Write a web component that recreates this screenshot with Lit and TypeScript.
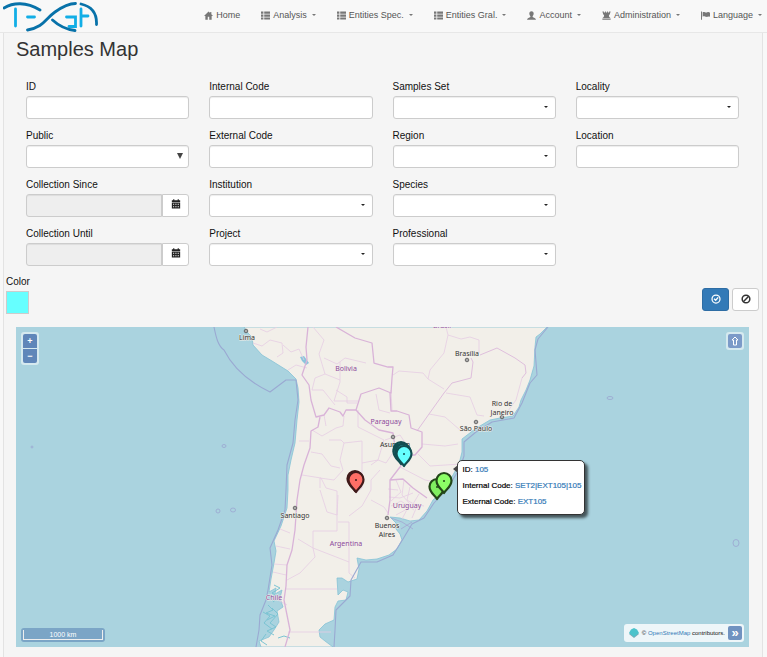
import { LitElement, html, svg, css } from "lit";
import { customElement } from "lit/decorators.js";

const icons: Record<string, unknown> = {
  home: svg`<path d="M6 0.5 L0 6.6 H1.8 V11.500 H5 V7.8 H7 V11.500 H10.200 V6.6 H12 L9.8 4.4 V1.2 H8.2 V2.8 Z"/>`,
  list: svg`<path d="M0 0.8h3.200v2.800h-3.200zM4.3 0.8h7.700v2.800h-7.700zM0 4.7h3.200v2.800h-3.200zM4.3 4.7h7.700v2.800h-7.700zM0 8.600h3.200v2.800h-3.200zM4.3 8.600h7.700v2.800h-7.700z"/>`,
  user: svg`<path d="M6 0.2C8 0.2 9 1.6 8.9 3.5C8.8 5.1 7.9 6.2 7.5 6.9V7.9C8.8 8.7 11.8 9.2 12 11.700H0C0.2 9.2 3.2 8.7 4.5 7.9V6.9C4.1 6.2 3.2 5.1 3.1 3.5C3 1.6 4 0.2 6 0.2Z"/>`,
  tower: svg`<path d="M0.5 0.5H2.5V2H4V0.5H5.2V2H6.8V0.5H8V2H9.5V0.5H11.500L10.200 5H9.200L9.6 8.3H10.800V9.300H1.200V8.3H2.4L2.8 5H1.8ZM0.5 10H11.500V11.700H0.5Z"/>`,
  flag: svg`<path d="M0 0.8H1.3V11.700H0ZM2.2 1.6C4.5 0.4 6 2.8 8 1.9C9.3 1.3 10.6 1.2 12 2.2V7.8C10.4 6.8 9.1 7.4 8 7.8C6 8.5 4.5 6.1 2.2 7.5Z"/>`,
  calendar: svg`<path fill-rule="evenodd" d="M1 1.6H2.6V0.4H4V1.6H8V0.4H9.4V1.6H11V3.8H1ZM1 4.5H11V11.5H1ZM2.4 5.6V6.8H3.5V5.6ZM4.6 5.6V6.8H5.6V5.6ZM6.6 5.6V6.8H7.6V5.6ZM8.6 5.6V6.8H9.6V5.6ZM2.4 8.6V9.8H3.5V8.6ZM4.6 8.6V9.8H5.6V8.6ZM6.6 8.6V9.8H7.6V8.6ZM8.6 8.6V9.8H9.6V8.6Z"/>`,
  check: svg`<g fill="none" stroke="currentColor"><circle cx="6" cy="6" r="4.8" stroke-width="1.5"/><path d="M3.7 5.8L5.6 7.6L8.6 4" stroke-width="1.7"/></g>`,
  ban: svg`<g fill="none" stroke="currentColor" stroke-width="1.8"><circle cx="6" cy="6" r="4.6"/><path d="M9.2 2.8L2.8 9.2"/></g>`,
};

const icon = (name: string) =>
  html`<svg class="icon" viewBox="0 0 12 12" aria-hidden="true">${icons[name]}</svg>`;

const menu = [
  { icon: "home", text: "Home", caret: false },
  { icon: "list", text: "Analysis", caret: true },
  { icon: "list", text: "Entities Spec.", caret: true },
  { icon: "list", text: "Entities Gral.", caret: true },
  { icon: "user", text: "Account", caret: true },
  { icon: "tower", text: "Administration", caret: true },
  { icon: "flag", text: "Language", caret: true },
];

type Kind = "text" | "pick" | "native" | "date";
const fields: [string, Kind][][] = [
  [["ID", "text"], ["Public", "native"], ["Collection Since", "date"], ["Collection Until", "date"]],
  [["Internal Code", "text"], ["External Code", "text"], ["Institution", "pick"], ["Project", "pick"]],
  [["Samples Set", "pick"], ["Region", "pick"], ["Species", "pick"], ["Professional", "pick"]],
  [["Locality", "pick"], ["Location", "text"]],
];

/* Navigation bar with the DNA logo. */
@customElement("top-nav")
export class TopNav extends LitElement {
  static styles = css`
    :host { display: block; }
    nav {
      display: flex; justify-content: space-between; align-items: flex-start;
      height: 32px; padding: 0 5px 0 3px;
      background: #f8f8f8; border-bottom: 1px solid #e7e7e7;
    }
    .logo { display: block; width: 96px; height: 32px; }
    .logo svg { display: block; width: 96px; height: 32px; }
    ul { display: flex; gap: 21px; margin: 0; padding: 8px 0 0; list-style: none; }
    a {
      display: flex; align-items: center; gap: 3px;
      font-size: 9px; line-height: 14px; color: #555; text-decoration: none; white-space: nowrap;
    }
    .icon { width: 9px; height: 9px; fill: #777; color: #777; }
    .caret { margin-left: 2px; border: solid transparent; border-width: 2px 2px 0; border-top-color: #777; }
  `;

  render() {
    return html`<nav>
      <a class="logo" href="#" aria-label="Home page">
        <svg viewBox="3 0 96 32" fill="none" stroke-linecap="round" stroke-width="2.8">
          <g stroke="#12aee6">
            <path d="M15.500 9V26M27.500 17H34.500M66.500 17H75.500V26.500H69M81 9V26M82 16H88"/>
          </g>
          <g stroke="#0872a9">
            <path d="M4 8C13 2.500 26 1.500 40 10M27.500 30C44 27 45 19 55 12C62 7 68 3.500 75.500 3.500M52.500 20C59 26 66 29.500 75 30.500M81 4C92 6.500 97 14 96.500 24.500"/>
          </g>
        </svg>
      </a>
      <ul>
        ${menu.map((m) => html`<li><a href="#">${icon(m.icon)}<span>${m.text}</span>${m.caret ? html`<span class="caret"></span>` : ""}</a></li>`)}
      </ul>
    </nav>`;
  }
}

/* Filter form above the map. */
@customElement("sample-filters")
export class SampleFilters extends LitElement {
  static styles = css`
    :host { display: block; }
    .grid { display: grid; grid-template-columns: repeat(4, 1fr); gap: 20px; padding: 0 23px 0 22px; align-items: start; }
    .column { display: grid; gap: 10px; }
    .field { display: grid; gap: 2px; }
    label { font-size: 10px; line-height: 14px; color: #111; }
    input, select, button { box-sizing: border-box; margin: 0; font: inherit; }
    .box {
      width: 100%; height: 23px; padding: 0 6px; min-width: 0;
      border: 1px solid #ccc; border-radius: 3px; background: #fff;
      box-shadow: inset 0 1px 1px rgba(0, 0, 0, 0.075);
    }
    select { appearance: none; }
    .select { position: relative; display: flex; }
    .select::after {
      content: ""; position: absolute; right: 8px; top: 10px; pointer-events: none;
      border: solid transparent; border-width: 2px 2px 0; border-top-color: #222;
    }
    .native::after { right: 6px; top: 8px; border-width: 6px 3px 0; border-top-color: #444; }
    .date { display: flex; }
    .date .box { flex: 1; border-radius: 3px 0 0 3px; background: #eee; }
    .date button {
      display: grid; place-items: center; width: 27px; height: 23px; padding: 0 0 3px;
      border: 1px solid #ccc; border-radius: 0 3px 3px 0; background: #fff; color: #222;
    }
    .icon { width: 10px; height: 10px; fill: currentColor; }
    .footer { display: flex; justify-content: space-between; align-items: flex-end; padding: 9px 3px 0 2px; }
    .color { display: grid; gap: 2px; }
    .swatch { width: 23px; height: 23px; padding: 0; border: 1px solid #ccc; background: none; appearance: none; }
    .swatch::-webkit-color-swatch-wrapper { padding: 0; }
    .swatch::-webkit-color-swatch { border: 0; border-radius: 0; }
    .actions { display: flex; gap: 3px; padding-bottom: 3px; }
    .actions button {
      display: grid; place-items: center; width: 27px; height: 23px; padding: 0 0 2px;
      border: 1px solid #ccc; border-radius: 3px; background: #fff; color: #333;
    }
    .actions .primary { background: #337ab7; border-color: #2e6da4; color: #fff; }
  `;

  private control(kind: Kind, id: string) {
    if (kind === "text") return html`<input class="box" type="text" id=${id}>`;
    if (kind === "date")
      return html`<div class="date"><input class="box" type="text" id=${id} readonly><button type="button" aria-label="Open calendar">${icon("calendar")}</button></div>`;
    return html`<div class="select ${kind === "native" ? "native" : ""}"><select class="box" id=${id}><option></option></select></div>`;
  }

  render() {
    return html`<form>
      <div class="grid">
        ${fields.map((col) => html`<div class="column">
          ${col.map(([text, kind]) => {
            const id = text.toLowerCase().replace(" ", "-");
            return html`<div class="field"><label for=${id}>${text}</label>${this.control(kind, id)}</div>`;
          })}
        </div>`)}
      </div>
      <div class="footer">
        <div class="color"><label for="color">Color</label><input class="swatch" id="color" type="color" value="#66ffff"></div>
        <div class="actions">
          <button class="primary" type="button" aria-label="Apply">${icon("check")}</button>
          <button type="button" aria-label="Clear">${icon("ban")}</button>
        </div>
      </div>
    </form>`;
  }
}

const LAND =
  "M244 327L248 333L252 337L253 345L262 355L272 361L288 371L296 379L298 388L299 402L297 420L295 443L291 460L288 475L288 490L287 508L281 526L274 541L276 551L274 563L271 579L269 592L276 588L275 594L282 590L280 598L283 607L277 611L279 622L274 630L269 637L259 641L261 647H333L325 641L320 637L319 630L325 624L334 620L335 607L338 601L346 600L348 592L343 590L338 595L337 578L342 578L348 582L357 579L359 569L357 558L366 560L377 559L389 555L397 549L402 540L400 534L396 529L396 523L390 517L400 518L410 521L419 520L427 511L433 500L443 490L453 475L459 464L462 452L462 439L475 429L490 420L500 418L513 416L519 407L521 400L526 390L530 380L534 366L535 347L536 337L540 334L547 327Z";

const COASTLINES = [
  "M214 327C216 337 218 346 224 350C232 366 245 380 270 392L286 380H296L298 400L295 420L293 443L287 465L286 490L285 510L278 530L270 548L272 565L268 590L266 600L260 615L259 630L256 647",
  "M334 647L335 630L336 610L350 596L351 580L361 562L377 562L393 555L403 539L412 524L424 518L434 503L447 489L460 468L464 456L464 442L476 432L492 422L514 418L522 403L530 383L537 375L535 350L538 339L548 327",
];

const BORDERS = [
  "M308 327L306 347L307 360L302 375L309 385L311 400L316 417L324 415L329 408L340 412L343 416L346 410H356L361 394L379 388L391 393L392 378L393 367H388L374 363L372 343L355 338L336 327",
  "M320 417L318 427L311 431L310 448L304 465L300 480L297 500L295 530L292 550L287 565L286 586L284 600L287 615L290 630L285 647",
  "M356 410L365 420L379 430L393 433L395 447L400 455H415L422 447V432L411 428L409 415L397 411H391L390 393",
  "M409 453L400 467L390 480L390 500L388 515M390 480L403 479L413 488L427 498",
];

const PROVINCES = [
  "M446 327L448 335L461 339L470 337L479 340V353M448 335L444 353L430 370L428 379L444 389M393 375L399 371L423 373L428 379M446 393L470 397L477 415L484 416M429 414L445 417L460 430M422 444L445 446L458 444M418 454L430 466L461 464M400 467L425 480L446 484M391 390L392 410M522 378L516 400L505 415",
  "M253 343L262 346L270 340L282 343L283 353L277 357M260 329L267 332L277 327M283 345L291 352L299 349L304 360M288 370L296 365L307 368M313 327L324 340L319 354L325 374L340 380M324 358L337 364L345 358L366 363M325 374L315 378L312 390M340 362V382L334 401H358M336 390L347 397V403H357M312 390H323L335 405",
  "M312 430L322 436L336 428L343 426L344 416M324 415L326 426M299 441H309M329 440H341L344 443L362 441V488L356 493M344 443L340 460L343 470L334 480L320 478V488M311 452L322 454L331 466L340 468M362 463L378 460L386 463L392 454M302 475L321 478L326 488L337 491V531H313V548L298 539M320 490L327 512L337 515L338 495M338 522H349V573L355 578M349 516L362 506L371 490V480L380 470M371 500L384 507L388 513M287 580L300 573L315 557L313 548L349 562M285 589H337M288 632H331M280 529L290 533M276 546L290 549M274 564L287 565M278 600L287 605M273 572L286 575M358 410V427L384 440L378 460L371 465M376 394L379 410L390 413M385 440L400 435L408 447",
  "M388 489L398 490M396 480L401 492L391 501M404 480L402 495L410 504L402 519M410 487L407 500L417 506L412 518M419 494L413 504L424 506M391 506L401 501L414 510M396 515L407 509M389 497L400 498L413 493",
];

const STATES =
  "M417 431L429 414L444 393L452 383L471 378L473 362L471 358M480 355L497 348L515 358L525 365L526 373L522 378";

const LAKES = "M300 357L304 356L309 363L306 365L302 361Z";
const FJORDS =
  "M274 585L280 588L272 593L279 597L273 602M268 605L273 610L266 613L275 616L267 620M272 608L278 614L270 623L276 627L267 631L274 635M263 612L270 616L264 623L272 629M278 638L284 636L290 638M266 634L261 641L267 645";

const pin = (x: number, y: number, fill: string, line: string) =>
  svg`<g><path d="M${x} ${y + 10}C${x - 2} ${y + 6} ${x - 7.5} ${y + 4} ${x - 7.5} ${y - 2.5}A7.5 7.5 0 0 1 ${x + 7.5} ${y - 2.5}C${x + 7.5} ${y + 4} ${x + 2} ${y + 6} ${x} ${y + 10}Z" fill=${fill} stroke=${line} stroke-width="2.2" stroke-linejoin="round"/><circle cx=${x} cy=${y - 2} r="1" fill=${line}/></g>`;

const cities: [number, number, string[], number, number][] = [
  [246, 331, ["Lima"], 247, 340],
  [467, 360, ["Brasília"], 467, 356],
  [502, 417, ["Rio de", "Janeiro"], 502, 406],
  [476, 422, ["São Paulo"], 476, 431],
  [393, 437, ["Asunción"], 395, 447],
  [295, 508, ["Santiago"], 295, 518],
  [387, 518, ["Buenos", "Aires"], 387, 528],
];

const countries: [number, number, string][] = [
  [346, 371, "Bolivia"],
  [386, 424, "Paraguay"],
  [407, 508, "Uruguay"],
  [346, 546, "Argentina"],
  [274, 600, "Chile"],
];

/* Map of the collected samples with its controls. */
@customElement("sample-map")
export class SampleMap extends LitElement {
  static styles = css`
    :host { display: block; position: relative; height: 320px; overflow: hidden; background: #aad3df; }
    .map { display: block; width: 100%; height: 100%; }
    .place { font-family: "Noto Sans", sans-serif; font-size: 7px; text-anchor: middle; paint-order: stroke; stroke: #f2efe9; stroke-width: 1px; fill: #333; }
    .country { font-size: 7px; fill: #8d4a9c; }
    button { margin: 0; padding: 0; border: 0; font-family: inherit; color: #fff; background: #5f86b9; }
    .zoom { position: absolute; left: 5px; top: 5px; display: grid; gap: 1px; padding: 2px; border-radius: 3px; background: rgba(255, 255, 255, 0.5); }
    .zoom button { width: 14px; height: 14px; font-size: 9px; font-weight: bold; line-height: 14px; border-radius: 2px 2px 0 0; }
    .zoom button:last-child { border-radius: 0 0 2px 2px; }
    .north { position: absolute; right: 5px; top: 5px; padding: 2px; border-radius: 3px; background: rgba(255, 255, 255, 0.5); }
    .north button { display: grid; place-items: center; width: 14px; height: 14px; border-radius: 2px; background: #7b9ac8; }
    .north svg { width: 8px; height: 10px; }
    .scale { position: absolute; left: 5px; bottom: 5px; padding: 2px; border-radius: 3px; background: #7ba5c6; }
    .bar { width: 78px; height: 9px; border: 1px solid #eee; border-top: 0; color: #fff; font-size: 7px; line-height: 9px; text-align: center; }
    .credit { position: absolute; right: 5px; bottom: 5px; display: flex; align-items: center; gap: 3px; padding: 2px 2px 2px 5px; border-radius: 3px; background: rgba(255, 255, 255, 0.8); font-size: 6px; line-height: 14px; color: #111; }
    .credit a { color: #337ab7; text-decoration: none; }
    .credit button { width: 14px; height: 14px; border-radius: 2px; background: #7092c0; font-size: 13px; font-weight: bold; line-height: 12px; }
    .credit svg { width: 10px; height: 10px; }
    .popup {
      position: absolute; left: calc(50% + 74px); top: 133px; box-sizing: border-box; width: 128px; padding: 1px 5px 4px;
      border: 1px solid #333; border-radius: 5px; background: #fff; box-shadow: 3px 3px 3px rgba(0, 0, 0, 0.6);
      font-size: 8px; line-height: 16px; color: #000; white-space: nowrap; -webkit-text-stroke: 0.2px;
    }
    .popup::before { content: ""; position: absolute; left: -5px; top: 4px; border: solid transparent; border-width: 4px 5px 4px 0; border-right-color: #444; }
    .popup p { margin: 0; }
    .popup a { color: #337ab7; text-decoration: none; }
  `;

  render() {
    return html`
      <svg class="map" viewBox="16 327 733 320" preserveAspectRatio="xMidYMid slice" role="img" aria-label="Map of South America">
        <path d=${LAND} fill="#f2efe9" stroke="#86c3d6" stroke-width="0.8"/>
        <path d=${LAKES} fill="#8cc5dc"/>
        <path d=${FJORDS} fill="none" stroke="#7cc4d3" stroke-width="1"/>
        <path d="M391 518L402 522L413 529M401 529L412 522" fill="none" stroke="#a3a6d2" stroke-width="0.8"/>
        ${PROVINCES.map((d) => svg`<path d=${d} fill="none" stroke="#e6cde3" stroke-width="0.8" stroke-linejoin="round"/>`)}
        <path d=${STATES} fill="none" stroke="#dfbfdd" stroke-width="1" stroke-linejoin="round"/>
        ${BORDERS.map((d) => svg`<path d=${d} fill="none" stroke="#d9b3d8" stroke-width="1.3" stroke-linejoin="round"/>`)}
        ${COASTLINES.map((d) => svg`<path d=${d} fill="none" stroke="#9aa9d2" stroke-width="1.1" stroke-linejoin="round"/>`)}
        <g fill="none" stroke="#9aa5d0" stroke-width="0.8">
          <ellipse cx="224" cy="446" rx="2" ry="1.5"/><ellipse cx="218" cy="511" rx="2" ry="2"/><ellipse cx="233" cy="510" rx="2.5" ry="2"/>
          <ellipse cx="610" cy="398" rx="3" ry="1.5"/><ellipse cx="736" cy="543" rx="3" ry="3.5"/><circle cx="32" cy="447" r="1"/>
        </g>
        ${cities.map(([cx, cy, lines, x, y]) => svg`
          <circle cx=${cx} cy=${cy} r="1.8" fill="#aaa" stroke="#555" stroke-width="0.8"/>
          ${lines.map((t, i) => svg`<text class="place" x=${x} y=${y + i * 9}>${t}</text>`)}`)}
        ${countries.map(([x, y, t]) => svg`<text class="place country" x=${x} y=${y}>${t}</text>`)}
        <text class="place country" x="442" y="328">Brasil</text>
        ${pin(355, 481, "#d4554f", "#401a1a")}${pin(356, 482, "#ff6f66", "#401a1a")}
        ${[[401, 452], [401, 454], [403, 454]].map(([x, y]) => pin(x, y, "#2e9a9c", "#124d50"))}${pin(404, 456, "#66ffff", "#124d50")}
        ${pin(437, 489, "#80ee60", "#234718")}${pin(444, 483, "#8cff66", "#234718")}
      </svg>
      <div class="zoom"><button type="button" aria-label="Zoom in">+</button><button type="button" aria-label="Zoom out">−</button></div>
      <div class="north"><button type="button" aria-label="Reset rotation">
        <svg viewBox="0 0 8 10" fill="none" stroke="#fff"><path d="M4 1L7 4H5.5V9H2.5V4H1Z"/></svg></button></div>
      <div class="popup">
        <p>ID: <a href="#">105</a></p>
        <p>Internal Code: <a href="#">SET2|EXT105|105</a></p>
        <p>External Code: <a href="#">EXT105</a></p>
      </div>
      <div class="scale"><div class="bar">1000 km</div></div>
      <div class="credit">
        <svg viewBox="0 0 10 10"><path d="M5 1.5L10 6L5 10L0 6Z" fill="#7eaab5"/><path d="M5 0L8 1.5L10 5L5 9L0 5L2 1.5Z" fill="#4dc3cb"/></svg>
        <span>© <a href="#">OpenStreetMap</a> contributors.</span>
        <button type="button" aria-label="Collapse attributions">»</button>
      </div>`;
  }
}

@customElement("app-root")
export class AppRoot extends LitElement {
  static styles = css`
    :host { display: flex; flex-direction: column; min-height: 100vh; background: #f8f8f8; font-family: "Liberation Sans", Arial, sans-serif; }
    main { flex: 1; margin: 0 4px 0 3px; border: solid #e3e3e3; border-width: 0 1px; background: #f5f5f5; }
    h1 { margin: 0; padding: 4px 12px 19px; font-size: 20px; font-weight: normal; line-height: 24px; color: #333; }
    sample-map { margin: 13px 13px 10px 12px; }
  `;

  render() {
    return html`<top-nav></top-nav>
      <main>
        <h1>Samples Map</h1>
        <sample-filters></sample-filters>
        <sample-map></sample-map>
      </main>`;
  }
}
